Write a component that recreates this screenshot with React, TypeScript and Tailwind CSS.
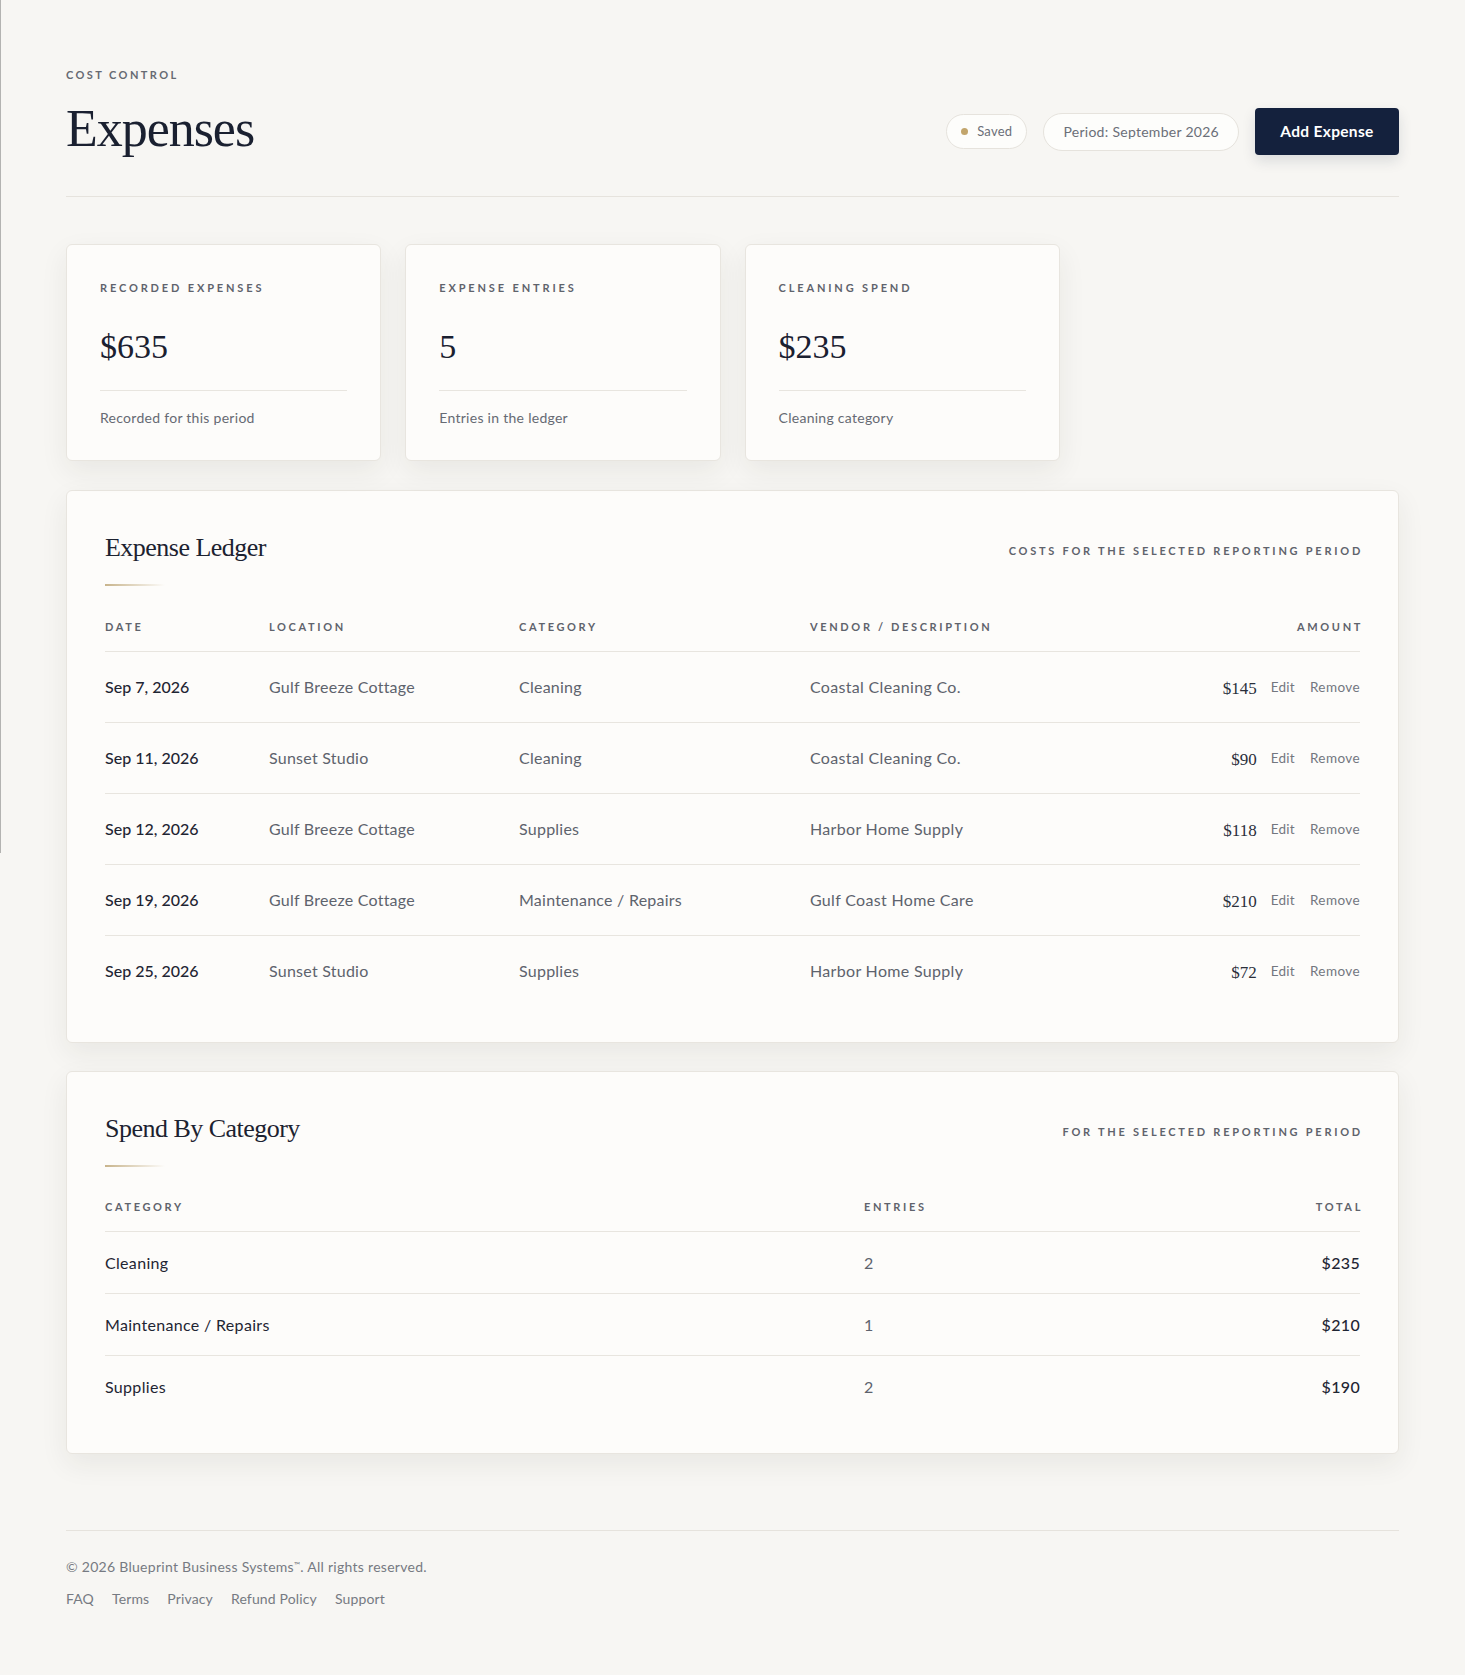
import React from "react"

const serif = "font-['Liberation_Serif',_'Times_New_Roman',_serif]"

const STATS = [
  { label: "Recorded Expenses", value: "$635", note: "Recorded for this period" },
  { label: "Expense Entries", value: "5", note: "Entries in the ledger" },
  { label: "Cleaning Spend", value: "$235", note: "Cleaning category" },
]

const LEDGER = [
  { date: "Sep 7, 2026", location: "Gulf Breeze Cottage", category: "Cleaning", vendor: "Coastal Cleaning Co.", amount: "$145" },
  { date: "Sep 11, 2026", location: "Sunset Studio", category: "Cleaning", vendor: "Coastal Cleaning Co.", amount: "$90" },
  { date: "Sep 12, 2026", location: "Gulf Breeze Cottage", category: "Supplies", vendor: "Harbor Home Supply", amount: "$118" },
  { date: "Sep 19, 2026", location: "Gulf Breeze Cottage", category: "Maintenance / Repairs", vendor: "Gulf Coast Home Care", amount: "$210" },
  { date: "Sep 25, 2026", location: "Sunset Studio", category: "Supplies", vendor: "Harbor Home Supply", amount: "$72" },
]

const CATEGORIES = [
  { name: "Cleaning", entries: 2, total: "$235" },
  { name: "Maintenance / Repairs", entries: 1, total: "$210" },
  { name: "Supplies", entries: 2, total: "$190" },
]

const FOOTER_LINKS = ["FAQ", "Terms", "Privacy", "Refund Policy", "Support"]

const th = "text-[11px] leading-[14px] font-bold uppercase tracking-[0.24em] text-[#5f636c]"

function SectionHead({ title, note }: { title: string; note: string }) {
  return (
    <div className="flex justify-between items-start">
      <div>
        <h2 className={`${serif} text-[26px] leading-[32px] tracking-[-0.02em] text-[#1c2230]`}>{title}</h2>
        <div className="mt-[20px] h-[2px] w-[60px] bg-gradient-to-r from-[#c8b48c] to-transparent" />
      </div>
      <div className={`${th} mt-[12px] tracking-[0.25em] -mr-[3px]`}>{note}</div>
    </div>
  )
}

export default function App() {
  return (
    <div className="relative min-h-screen bg-[#f7f6f3] font-['Lato',_'Liberation_Sans',_sans-serif] text-[#1f2533]">
      {/* thin edge line from the captured window */}
      <div className="absolute left-0 top-0 w-px h-[853px] bg-[#b3b3b1]" />

      <div className="px-[66px] pt-[68px] pb-[64px]">
        {/* Header */}
        <header className="flex justify-between items-end pb-[37px] border-b border-[#e6e3dd]">
          <div>
            <div className="text-[11px] leading-[14px] font-bold uppercase tracking-[0.22em] text-[#666a72]">Cost Control</div>
            <h1 className={`${serif} mt-[17px] text-[52px] leading-[60px] tracking-[-0.02em] text-[#1a2030]`}>Expenses</h1>
          </div>
          <div className="flex items-center gap-[16px] pb-[4px]">
            <div className="flex items-center gap-[9px] h-[35px] px-[14px] rounded-full border border-[#e6e3dd] bg-[#fdfdfb] text-[13px] text-[#6b6f78] tracking-[0.02em]">
              <span className="w-[7px] h-[7px] rounded-full bg-[#c2a56c]" />
              Saved
            </div>
            <div className="flex items-center h-[38px] px-[19px] rounded-full border border-[#e6e3dd] bg-[#fdfdfb] text-[14px] text-[#6b6f78] tracking-[0.02em]">
              Period: September 2026
            </div>
            <button className="h-[47px] w-[144px] rounded-[4px] bg-[#14213d] text-white text-[15.5px] font-bold tracking-[0.02em] shadow-[0_6px_14px_rgba(20,33,61,0.12)]">
              Add Expense
            </button>
          </div>
        </header>

        {/* Stat cards */}
        <section className="mt-[47px] grid grid-cols-4 gap-6">
          {STATS.map((s) => (
            <div
              key={s.label}
              className="rounded-[6px] border border-[#e8e5df] bg-[#fdfcfa] pt-[36px] px-[33px] pb-[32px] shadow-[0_10px_28px_rgba(40,36,28,0.07)]"
            >
              <div className="text-[11px] leading-[13px] font-bold uppercase tracking-[0.26em] text-[#5f636c]">{s.label}</div>
              <div className={`${serif} mt-[33px] text-[34px] leading-[40px] text-[#1a2030]`}>{s.value}</div>
              <div className="mt-[23px] border-t border-[#e8e5df]" />
              <div className="mt-[17px] text-[14px] leading-[20px] text-[#666a73] tracking-[0.02em]">{s.note}</div>
            </div>
          ))}
        </section>

        {/* Ledger */}
        <section className="mt-[29px] rounded-[6px] border border-[#e8e5df] bg-[#fdfcfa] pt-[41px] px-[38px] pb-[36px] shadow-[0_10px_28px_rgba(40,36,28,0.07)]">
          <SectionHead title="Expense Ledger" note="Costs for the selected reporting period" />
          <div className="mt-[34px]">
            <div className="grid grid-cols-[164px_250px_291px_1fr_auto] pb-[17px] border-b border-[#e8e5df]">
              <div className={th}>Date</div>
              <div className={th}>Location</div>
              <div className={th}>Category</div>
              <div className={th}>Vendor / Description</div>
              <div className={`${th} text-right -mr-[3px]`}>Amount</div>
            </div>
            {LEDGER.map((r, i) => (
              <div
                key={r.date}
                className={`grid grid-cols-[164px_250px_291px_1fr_auto] items-center py-[24px] text-[16px] leading-[22px] ${i < LEDGER.length - 1 ? "border-b border-[#e8e5df]" : ""}`}
              >
                <div className="font-medium text-[#1f2533]">{r.date}</div>
                <div className="text-[#5e636d] tracking-[0.015em]">{r.location}</div>
                <div className="text-[#5e636d] tracking-[0.015em]">{r.category}</div>
                <div className="text-[#5e636d] tracking-[0.02em]">{r.vendor}</div>
                <div className="flex items-center justify-end">
                  <span className={`${serif} text-[17px] leading-[22px] text-[#2a2f3a] translate-y-[2px]`}>{r.amount}</span>
                  <span className="ml-[14px] text-[13.5px] text-[#73777f] tracking-[0.02em]">Edit</span>
                  <span className="ml-[15px] text-[13.5px] text-[#73777f] tracking-[0.03em]">Remove</span>
                </div>
              </div>
            ))}
          </div>
        </section>

        {/* Spend by category */}
        <section className="mt-[28px] rounded-[6px] border border-[#e8e5df] bg-[#fdfcfa] pt-[41px] px-[38px] pb-[36px] shadow-[0_10px_28px_rgba(40,36,28,0.07)]">
          <SectionHead title="Spend By Category" note="For the selected reporting period" />
          <div className="mt-[33px]">
            <div className="grid grid-cols-[759px_1fr_auto] pb-[17px] border-b border-[#e8e5df]">
              <div className={th}>Category</div>
              <div className={th}>Entries</div>
              <div className={`${th} text-right -mr-[3px]`}>Total</div>
            </div>
            {CATEGORIES.map((c, i) => (
              <div
                key={c.name}
                className={`grid grid-cols-[759px_1fr_auto] items-center py-[20px] text-[16px] leading-[21px] ${i < CATEGORIES.length - 1 ? "border-b border-[#e8e5df]" : ""}`}
              >
                <div className="text-[#1f2533] tracking-[0.02em]">{c.name}</div>
                <div className="text-[#5e636d]">{c.entries}</div>
                <div className="text-right font-medium text-[#1f2533] tracking-[0.02em]">{c.total}</div>
              </div>
            ))}
          </div>
        </section>

        {/* Footer */}
        <footer className="mt-[76px] border-t border-[#e6e3dd] pt-[26px]">
          <p className="text-[14px] leading-[20px] text-[#767a82] tracking-[0.02em]">
            © 2026 Blueprint Business Systems<sup className="text-[8px]">™</sup>. All rights reserved.
          </p>
          <nav className="mt-[12px] flex gap-[18px] text-[14px] leading-[20px] text-[#767a82] tracking-[0.01em]">
            {FOOTER_LINKS.map((l) => (
              <a key={l} href="#" className="hover:text-[#1f2533]">{l}</a>
            ))}
          </nav>
        </footer>
      </div>
    </div>
  )
}
